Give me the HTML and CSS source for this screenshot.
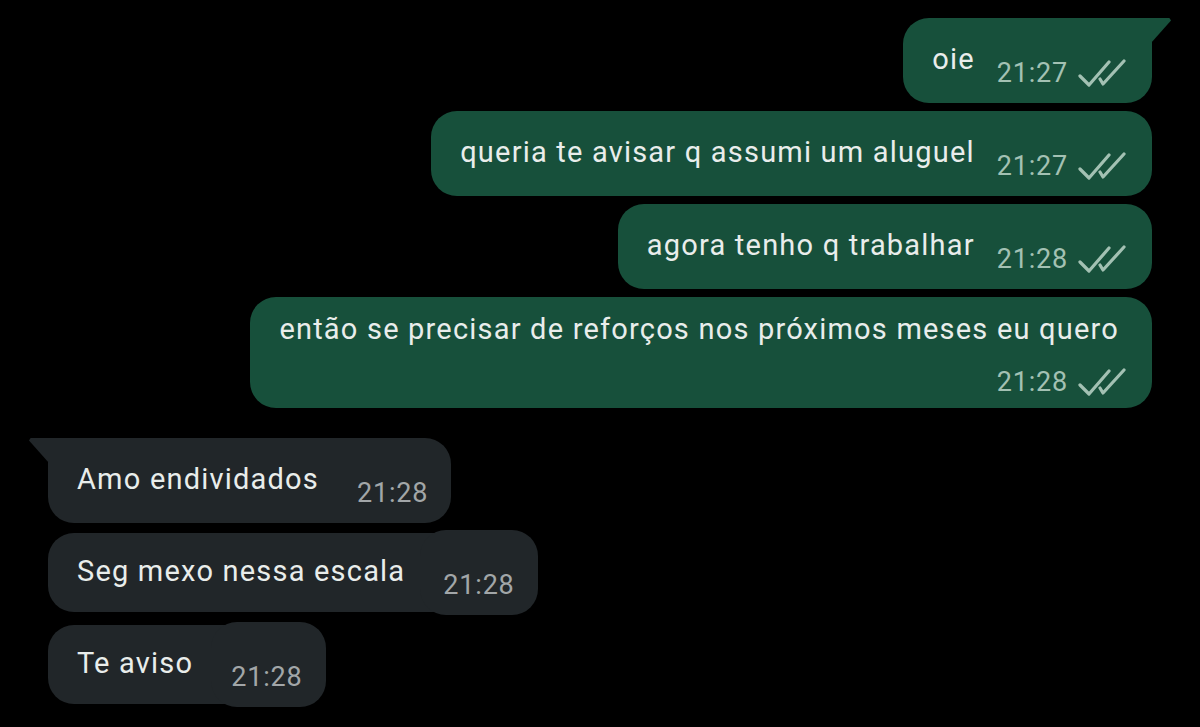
FILE: index.html
```html
<!DOCTYPE html>
<html lang="pt-BR">

<head>
    <meta charset="UTF-8">
    <meta name="viewport" content="width=device-width, initial-scale=1.0">
    <title>Conversa</title>
    <link rel="stylesheet" href="styles.css">
</head>

<body>
    <div class="chat">
        <div class="group out">
            <div class="bubble first">
                <span class="text">oie</span>
                <span class="meta">21:27
                    <svg class="ticks" viewBox="0 0 48 28"><path d="M2 17 L11 26 L31 3 M22 20 L25 25 L46 2" /></svg>
                </span>
            </div>
            <div class="bubble">
                <span class="text">queria te avisar q assumi um aluguel</span>
                <span class="meta">21:27
                    <svg class="ticks" viewBox="0 0 48 28"><path d="M2 17 L11 26 L31 3 M22 20 L25 25 L46 2" /></svg>
                </span>
            </div>
            <div class="bubble">
                <span class="text">agora tenho q trabalhar</span>
                <span class="meta">21:28
                    <svg class="ticks" viewBox="0 0 48 28"><path d="M2 17 L11 26 L31 3 M22 20 L25 25 L46 2" /></svg>
                </span>
            </div>
            <div class="bubble wrap">
                <span class="text">então se precisar de reforços nos próximos meses eu quero</span>
                <span class="meta">21:28
                    <svg class="ticks" viewBox="0 0 48 28"><path d="M2 17 L11 26 L31 3 M22 20 L25 25 L46 2" /></svg>
                </span>
            </div>
        </div>

        <div class="group in">
            <div class="bubble first">
                <span class="text">Amo endividados</span>
                <span class="meta">21:28</span>
            </div>
            <div class="bubble patch patch-2">
                <span class="text">Seg mexo nessa escala</span>
                <span class="meta">21:28</span>
            </div>
            <div class="bubble patch patch-3">
                <span class="text">Te aviso</span>
                <span class="meta">21:28</span>
            </div>
        </div>
    </div>
</body>

</html>
```

FILE: styles.css
```css
body {
    margin: 0;
    background-color: #000;
    font-family: Roboto, "Liberation Sans", Arial, sans-serif;
}

.chat {
    display: flex;
    flex-direction: column;
    gap: 30px;
    padding-top: 18px;
}

.group {
    display: flex;
    flex-direction: column;
}

.out {
    align-items: flex-end;
    padding-right: 48px;
    gap: 8px;
}

.in {
    align-items: flex-start;
    padding-left: 48px;
    gap: 7px;
}

.bubble {
    position: relative;
    display: flex;
    align-items: flex-end;
    padding: 23px 26px 16px 29px;
    border-radius: 26px;
    color: #e9edeb;
}

.out .bubble {
    background-color: #17503b;
}

.in .bubble {
    background-color: #212629;
    padding-right: 23px;
}

.text {
    font-size: 29px;
    letter-spacing: 1.2px;
    line-height: 36px;
    padding-bottom: 10px;
    white-space: nowrap;
}

.meta {
    display: flex;
    align-items: center;
    font-size: 27px;
    letter-spacing: 0.8px;
    line-height: 28px;
    white-space: nowrap;
}

.out .meta {
    color: #a3c1b3;
    margin-left: 22px;
}

.in .meta {
    color: #a2a6a8;
    margin-left: 38px;
}

.ticks {
    width: 48px;
    height: 28px;
    margin-left: 10px;
    fill: none;
    stroke: #a3c1b3;
    stroke-width: 3.2;
    stroke-linecap: round;
    stroke-linejoin: round;
}

/* multi line: time goes under the text */
.bubble.wrap {
    flex-direction: column;
    align-items: stretch;
    padding-top: 14px;
    padding-bottom: 12px;
    padding-right: 33px;
}

.bubble.wrap .text {
    padding-bottom: 0;
}

.bubble.wrap .meta {
    align-self: flex-end;
    margin-top: 21px;
    margin-right: -7px;
}

/* tails */
.bubble.first::after {
    content: "";
    position: absolute;
    top: 0;
    width: 20px;
    height: 25px;
}

.out .bubble.first {
    border-top-right-radius: 0;
}

.out .bubble.first::after {
    right: -19px;
    background-color: #17503b;
    clip-path: polygon(0 0, 92% 0, 100% 10%, 0 100%);
}

.in .bubble.first {
    border-top-left-radius: 0;
}

.in .bubble.first::after {
    left: -19px;
    background-color: #212629;
    clip-path: polygon(8% 0, 100% 0, 100% 100%, 0 10%);
}

/* incoming bubbles stitched from two pieces */
.in .bubble.patch {
    background-color: transparent;
    z-index: 0;
}

.bubble.patch::before,
.bubble.patch::after {
    content: "";
    position: absolute;
    background-color: #212629;
    border-radius: 26px;
    z-index: -1;
}

.bubble.patch::before {
    left: 0;
    right: 20px;
    top: 3px;
    bottom: 3px;
}

.bubble.patch::after {
    right: 0;
    top: 0;
    bottom: 0;
}

.patch-2::after {
    width: 118px;
}

.patch-3::after {
    width: 115px;
}
```
